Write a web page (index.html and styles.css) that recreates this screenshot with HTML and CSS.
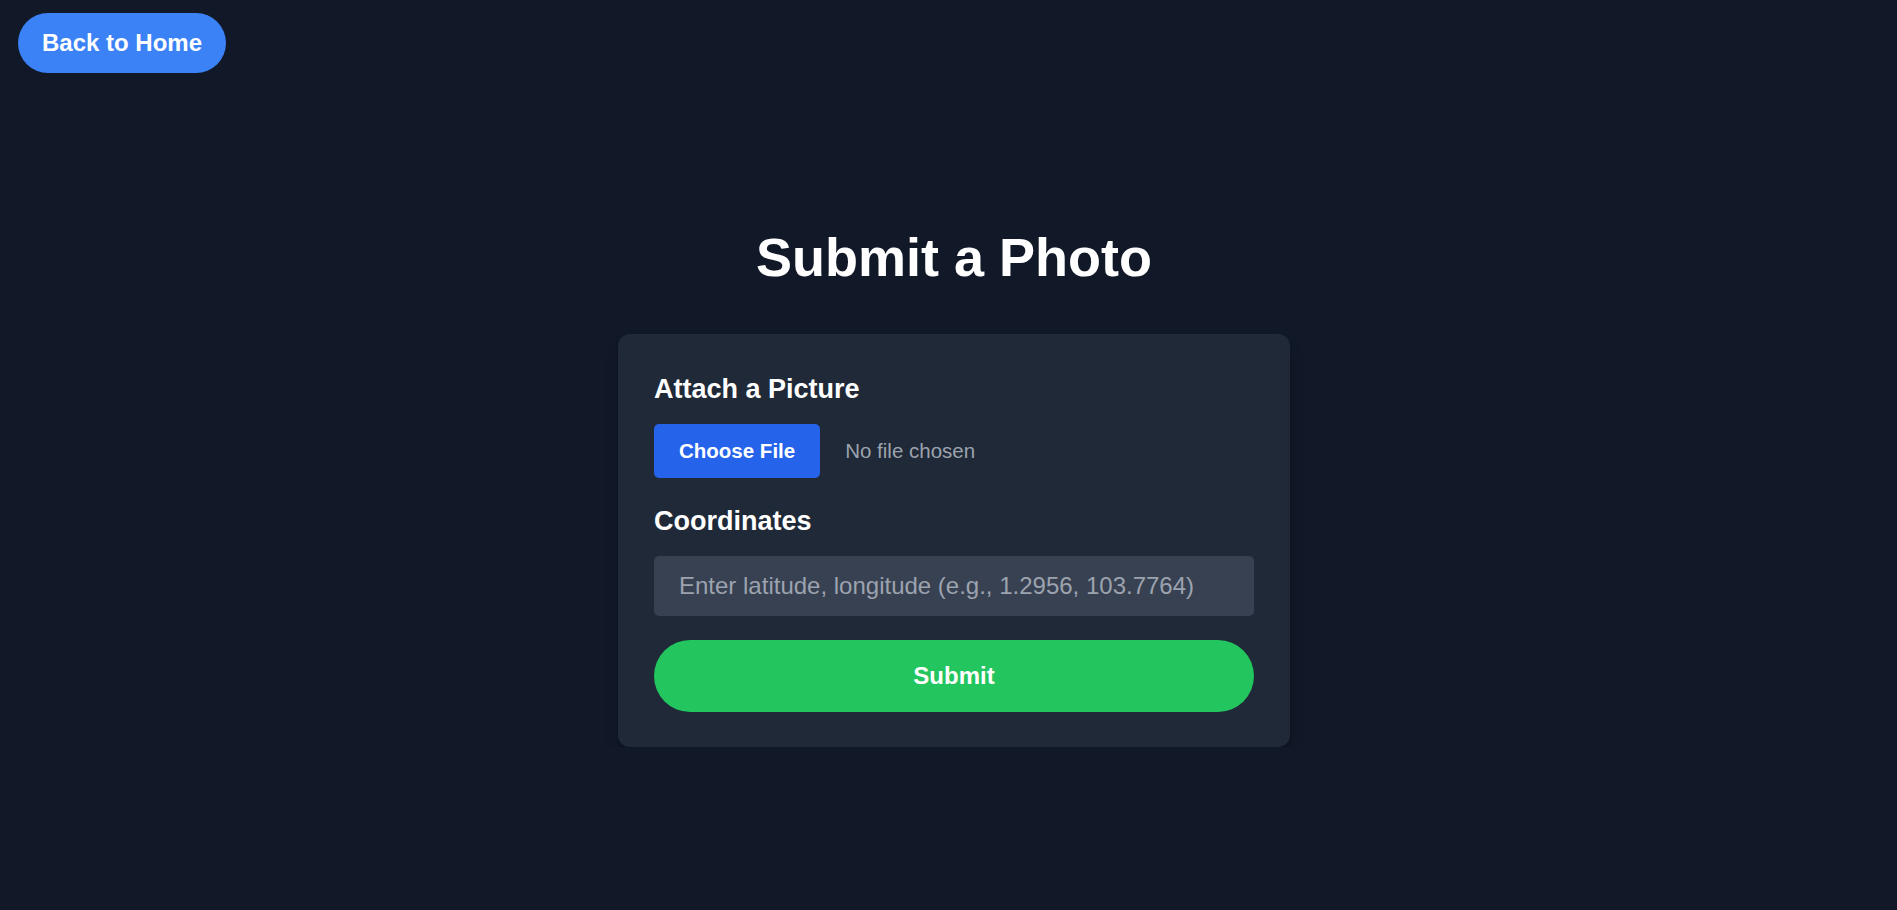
FILE: index.html
```html
<!DOCTYPE html>
<html lang="en">
<head>
  <meta charset="UTF-8" />
  <meta name="viewport" content="width=device-width, initial-scale=1.0" />
  <title>Submit a Photo</title>
  <link rel="stylesheet" href="styles.css">
</head>
<body>
  <header class="top-bar">
    <a class="back-button" href="#">Back to Home</a>
  </header>

  <main class="page">
    <h1 class="page-title">Submit a Photo</h1>

    <form class="card" onsubmit="return false;">
      <div class="field">
        <label class="field-label" for="photo">Attach a Picture</label>
        <input class="file-input" type="file" id="photo" accept="image/*" />
      </div>

      <div class="field">
        <label class="field-label" for="coords">Coordinates</label>
        <input class="text-input" type="text" id="coords" placeholder="Enter latitude, longitude (e.g., 1.2956, 103.7764)" />
      </div>

      <button class="submit-button" type="submit">Submit</button>
    </form>
  </main>
</body>
</html>
```

FILE: styles.css
```css
body {
  margin: 0;
  background-color: #111827;
  color: #fff;
  font-family: "Liberation Sans", Arial, sans-serif;
}
.top-bar {
  padding: 13px 18px 0;
}
.back-button {
  display: inline-block;
  padding: 16px 24px;
  line-height: 28px;
  font-size: 24px;
  font-weight: bold;
  color: #fff;
  text-decoration: none;
  background-color: #3b82f6;
  border-radius: 9999px;
}
.page {
  display: flex;
  flex-direction: column;
  align-items: center;
  padding: 153px 0 0 11px;
}
.page-title {
  margin: 0 0 46px;
  font-size: 54px;
  line-height: 62px;
  font-weight: bold;
}
.card {
  box-sizing: border-box;
  width: 672px;
  padding: 36px 36px 35px;
  background-color: #1f2937;
  border-radius: 12px;
  box-shadow: 0 10px 15px -3px rgba(0, 0, 0, 0.25), 0 4px 6px -4px rgba(0, 0, 0, 0.2);
  display: flex;
  flex-direction: column;
  gap: 24px;
}
.field {
  display: flex;
  flex-direction: column;
  align-items: flex-start;
}
.field-label {
  font-size: 27px;
  line-height: 38px;
  font-weight: bold;
  margin-bottom: 16px;
}
.file-input {
  font-family: "Liberation Sans", Arial, sans-serif;
  font-size: 20.5px;
  color: #9ca3af;
}
.file-input::file-selector-button {
  font-family: "Liberation Sans", Arial, sans-serif;
  font-size: 20.5px;
  font-weight: bold;
  color: #fff;
  background-color: #2563eb;
  border: none;
  border-radius: 5px;
  padding: 15px 25px;
  margin-right: 25px;
  cursor: pointer;
}
.text-input {
  box-sizing: border-box;
  width: 100%;
  height: 60px;
  padding: 0 25px;
  border: none;
  border-radius: 5px;
  background-color: #374151;
  color: #fff;
  font-family: "Liberation Sans", Arial, sans-serif;
  font-size: 24px;
  outline: none;
}
.text-input::placeholder {
  color: #9ca3af;
}
.submit-button {
  height: 72px;
  width: 100%;
  border: none;
  border-radius: 9999px;
  background-color: #22c55e;
  color: #fff;
  font-family: "Liberation Sans", Arial, sans-serif;
  font-size: 24px;
  font-weight: bold;
  cursor: pointer;
}
```
